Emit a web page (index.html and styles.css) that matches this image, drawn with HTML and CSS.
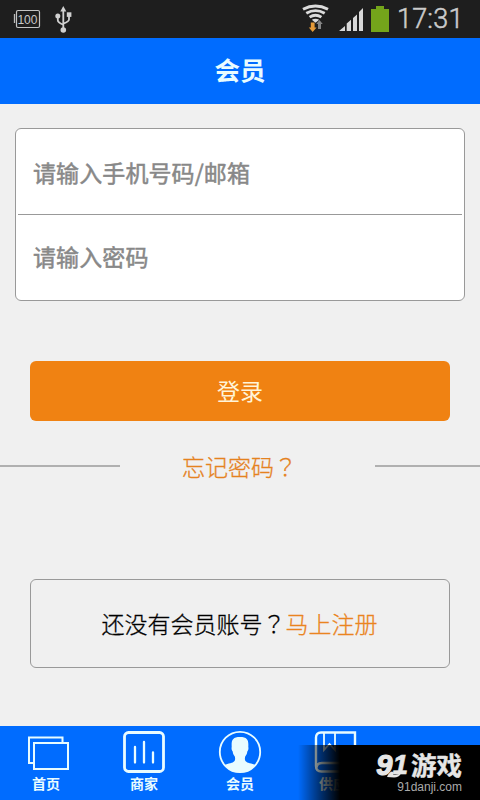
FILE: index.html
```html
<!DOCTYPE html>
<html lang="zh-CN">
<head>
<meta charset="utf-8">
<title>会员</title>
<link rel="stylesheet" href="styles.css">
</head>
<body>
<div class="screen">
  <div class="status">
    <svg class="status-left" width="80" height="38" viewBox="0 0 80 38">
      <path d="M14.500 14v9" stroke="#bbb" stroke-width="1.300"/>
      <rect x="16.500" y="10.500" width="23" height="17" rx="1.500" fill="none" stroke="#c4c4c4" stroke-width="1.200"/>
      <text x="27.400" y="24.300" text-anchor="middle" textLength="20" class="level">100</text>
      <g fill="none" stroke="#d0d0d0" stroke-width="1.800">
        <path d="M63.300 9v20M57.800 17v3.200q0 2.200 5.500 4.600M69 16v3.500q0 2-5.700 4.200"/>
      </g>
      <g fill="#d0d0d0">
        <path d="M63.300 6l3 5.500h-6z"/><circle cx="57.800" cy="16" r="2.500"/><rect x="66.800" y="12.300" width="4.600" height="4.600"/><circle cx="63.300" cy="30" r="2.800"/>
      </g>
    </svg>
    <svg class="status-right" width="95" height="38" viewBox="300 0 95 38">
      <g fill="none" stroke="#dcdcdc" stroke-width="2.900">
        <path d="M303 9.300q12.500-6.600 25 0M306.300 13.300q9.200-5.400 18.400 0M309.600 17.100q5.900-3.800 11.800 0"/>
      </g>
      <path d="M311.800 19.800q3.700-2.300 7.400 0l-3.700 3z" fill="#dcdcdc"/>
      <path d="M310.800 22.500h3.800v5h2l-3.900 4.500-3.900-4.500h2z" fill="#e59a38"/>
      <path d="M318 29v-5h-1.700l3.200-4 3.200 4H321v5z" fill="#858585"/>
      <path d="M339 31l6-5v5zM346.700 31v-7.500l4.300-3.800V31zM353 31V18l4-3.500V31z" fill="#d8d8d8"/>
      <path d="M363 8v23h-4V12z" fill="#d8d8d8"/>
      <path d="M371 9h5V6h8v3h5v23h-18z" fill="#74a51b"/>
    </svg>
    <span class="clock">17:31</span>
  </div>
  <header class="header">会员</header>
  <main class="content">
    <form class="fields">
      <div class="field">请输入手机号码/邮箱</div>
      <div class="field">请输入密码</div>
    </form>
    <div class="login">登录</div>
    <div class="forgot"><i></i><span>忘记密码<b lang="zh-TW">？</b></span><i class="short"></i></div>
    <div class="register"><span>还没有会员账号<b lang="zh-TW">？</b><a>马上注册</a></span></div>
  </main>
  <nav class="tabs">
    <div class="tab first">
      <svg width="44" height="44" viewBox="0 0 44 44" fill="none" stroke="#e6fbff" stroke-width="2"><path d="M8 33H3V7.500h33.500v5"/><rect x="8" y="13" width="34" height="26"/></svg>
      <span>首页</span>
    </div>
    <div class="tab">
      <svg width="44" height="44" viewBox="0 0 44 44" fill="none" stroke="#e9fcff"><rect x="2.500" y="2.500" width="39" height="39" rx="4" stroke-width="2.800"/><path d="M13 17v15.500M22 12v20.500M31 22.500v10" stroke-width="2.300" stroke-linecap="round"/></svg>
      <span>商家</span>
    </div>
    <div class="tab">
      <svg width="44" height="44" viewBox="0 0 44 44"><circle cx="22" cy="22" r="20.200" fill="none" stroke="#e9fcff" stroke-width="1.800"/><path d="M6.500 35C9 33.500 14 33.500 16 31.500C17.500 30 17.200 28 16.800 26.500C15.500 25 15 23.500 14.700 21.500C13.700 20.500 13.300 18.500 13.700 17C13.300 10 14.500 7 22 7C29.500 7 30.700 10 30.300 17C30.700 18.500 30.300 20.500 29.300 21.500C29 23.500 28.500 25 27.200 26.500C26.800 28 26.500 30 28 31.500C30 33.500 35 33.500 37.500 35C33 40.500 28 42.300 22 42.300S11 40.500 6.500 35z" fill="#e9fcff"/></svg>
      <span>会员</span>
    </div>
    <div class="tab">
      <svg width="44" height="44" viewBox="0 0 44 44" fill="none" stroke="#e9fcff" stroke-width="2.400"><path d="M41 33V2.500H7q-5 0-5 5V36q0 5.500 5.500 5.500H41M41 33H8q-5 0-5.500 4.500"/><path d="M10 3v17l5.500-6 5.500 6V3" stroke-width="1.800"/></svg>
      <span>供应</span>
    </div>
    <div class="tab"></div>
  </nav>
  <div class="watermark">
    <div class="brand"><span class="nine">9</span><span class="one">1</span><span class="game">游戏</span></div>
    <div class="site">91danji.com</div>
    <svg class="swoosh" width="16" height="8" viewBox="0 0 16 8"><path d="M0 7Q2 2 5 1.500Q7 2 6 4.500Q10 5 14 3.500Q12 7.500 7 7.500z" fill="#e6e6e6"/></svg>
  </div>
</div>
</body>
</html>
```
FILE: styles.css
```css
* { box-sizing: border-box; }
body { margin: 0; font-family: "Noto Sans CJK SC", sans-serif; }
.screen { position: relative; width: 480px; height: 800px; overflow: hidden; background: #f0f0f0; display: flex; flex-direction: column; }
.status { height: 38px; flex: none; background: #1e1e1e; display: flex; align-items: center; }
.status-right { margin-left: 220px; }
.level { font: 12px "Liberation Sans", sans-serif; fill: #c8c8c8; }
.clock { font: 27px/38px Roboto, sans-serif; color: #cbcbcb; margin-left: 2px; font-weight: 300; -webkit-text-stroke: .5px #cbcbcb; letter-spacing: .2px; }
.header { height: 66px; flex: none; background: #006cff; color: #e9fcff; font-size: 25.500px; font-weight: 700; line-height: 62px; text-align: center; }
.content { flex: 1; padding-top: 24px; }
.fields { margin: 0 15px; height: 173px; background: #fff; border: 1px solid #999; border-radius: 6px; padding: 0 2px; }
.field { height: 85px; padding-left: 15px; font-size: 23px; line-height: 83px; color: #888; -webkit-text-stroke: .5px #888; letter-spacing: .1px; }
.field:first-child { height: 86px; line-height: 87px; border-bottom: 1px solid #999; }
.login { height: 60px; margin: 60px 30px 0; border-radius: 6px; background: #f08212; color: #fff4d8; font-size: 23px; line-height: 58px; text-align: center; }
.forgot { height: 40px; margin-top: 25px; display: flex; align-items: center; color: #e5821f; font-size: 23px; line-height: 38px; }
.forgot i { width: 120px; height: 2px; background: #b0b0b0; }
.forgot .short { width: 105px; margin-left: auto; }
.forgot b, .register b { font-family: "Noto Sans CJK TC", sans-serif; font-weight: 300; }
.forgot span { margin-left: 62px; font-weight: 300; -webkit-text-stroke: .3px; }
.register { height: 89px; margin: 93px 30px 0; border: 1px solid #999; border-radius: 6px; color: #000; font-size: 23px; font-weight: 300; line-height: 87px; text-align: center; -webkit-text-stroke: .3px; }
.register span { margin-right: 1px; }
.register a { color: #ea8420; }
.tabs { height: 74px; flex: none; background: #006cff; display: grid; grid-template-columns: repeat(5, 96px); }
.tab { display: flex; flex-direction: column; align-items: center; padding-top: 4px; color: #e9fcff; font-size: 14px; font-weight: 700; line-height: 18px; }
.tab.first span { margin-right: 4px; }
.tab:nth-child(4) span { margin-right: 6px; }
.watermark { position: absolute; right: 0; bottom: 0; width: 182px; height: 55px; padding: 5px 18px 0 0; background: linear-gradient(90deg, rgba(0,0,0,0), rgba(0,0,0,.5) 20px, #000 42px); color: #e6e6e6; display: flex; flex-direction: column; align-items: flex-end; }
.brand { display: flex; align-items: center; height: 29px; }
.nine { font: italic 900 29px/28px "Liberation Sans", sans-serif; -webkit-text-stroke: 1.200px #e6e6e6; }
.one { font: italic 900 28px/28px "Liberation Sans", sans-serif; -webkit-text-stroke: .6px #e6e6e6; margin-right: 3px; }
.game { font-size: 25.500px; line-height: 26px; font-weight: 700; margin-top: -2px; -webkit-text-stroke: .4px #e6e6e6; }
.swoosh { position: absolute; left: 89px; top: 25px; }
.site { font: 12px/14px "Liberation Sans", sans-serif; color: #aaa; margin-top: 1px; }
```
